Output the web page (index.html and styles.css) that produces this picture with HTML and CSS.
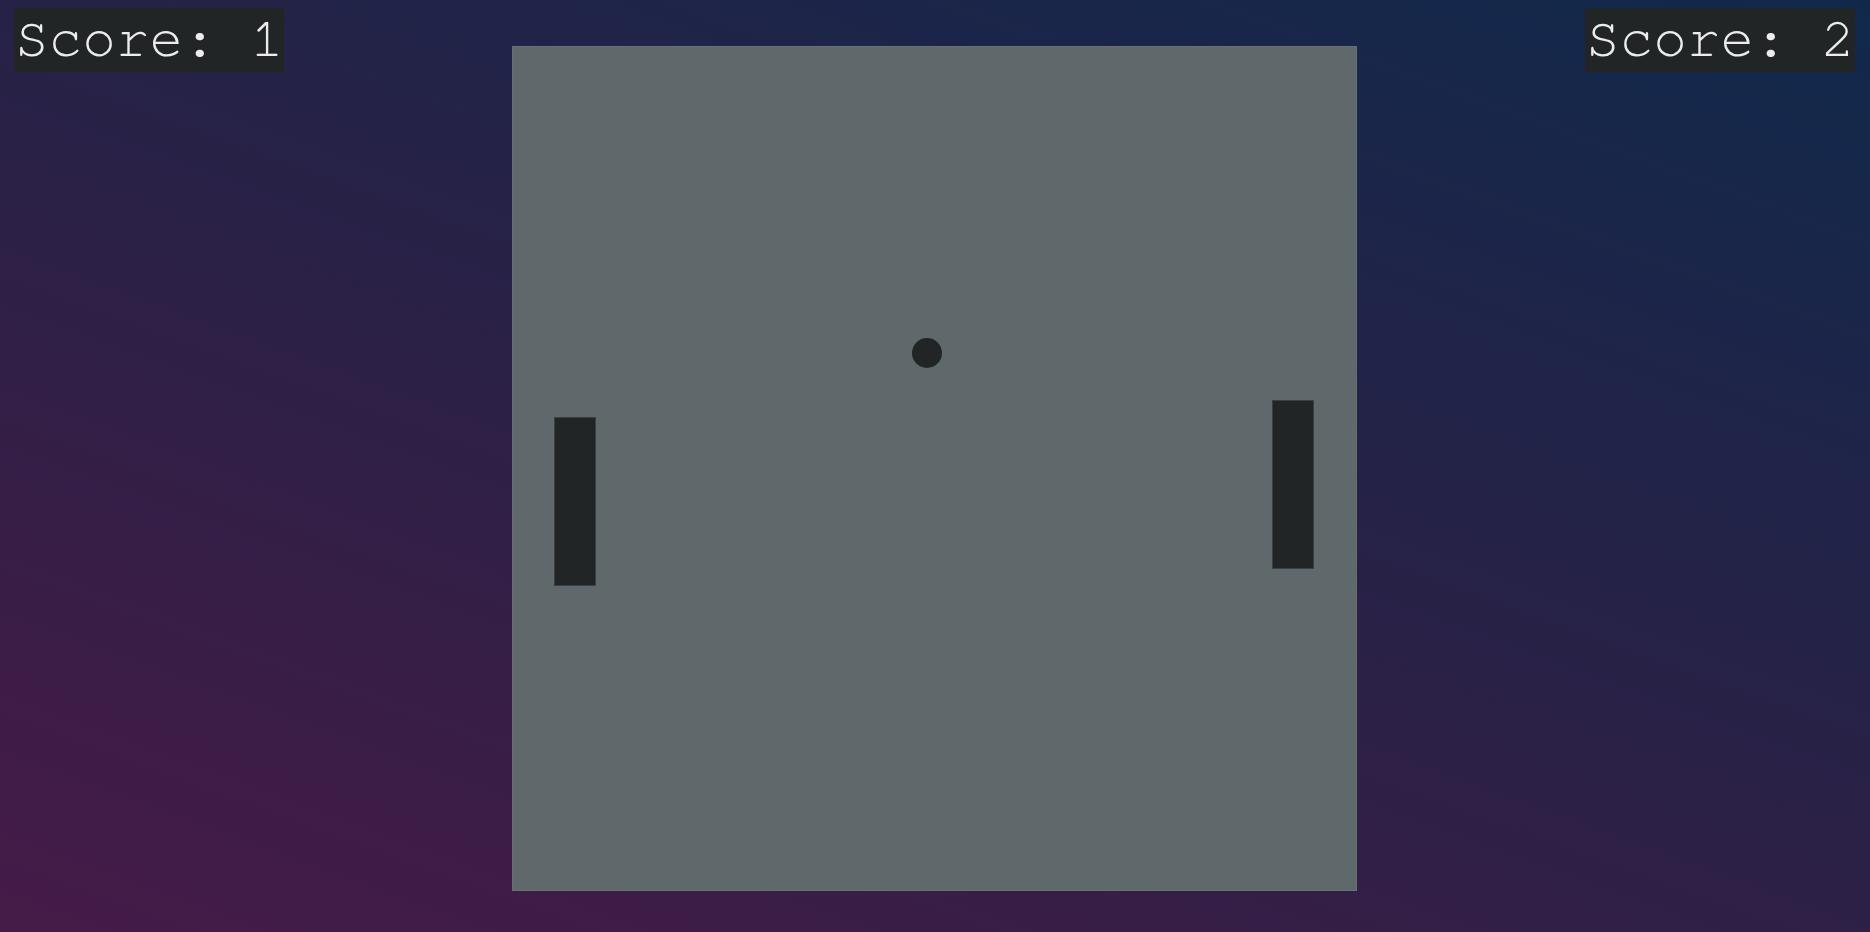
FILE: index.html
```html
<!DOCTYPE html>
<html>
<head>
<meta charset="utf-8">
<link rel="stylesheet" href="styles.css">
</head>
<body>
<div class="page">
  <div class="score score-left">Score: 1</div>
  <div class="board">
    <div class="paddle paddle-left"></div>
    <div class="ball"></div>
    <div class="paddle paddle-right"></div>
  </div>
  <div class="score score-right">Score: 2</div>
</div>
</body>
</html>
```
FILE: styles.css
```css
html, body {
  margin: 0;
  padding: 0;
  height: 100%;
}
body {
  background: linear-gradient(20deg, #461b48 0%, #2c2046 45%, #10294b 100%);
  font-family: "Nimbus Mono PS", "Nimbus Mono L", "FreeMono", "Courier 10 Pitch", "Courier", "Liberation Mono", monospace;
  overflow: hidden;
}
.page {
  height: 932px;
  display: flex;
  justify-content: space-between;
  align-items: flex-start;
  padding: 8px 15px 0 14px;
  box-sizing: border-box;
}
.score {
  background: #212526;
  color: #ececec;
  font-size: 56px;
  line-height: 62px;
  height: 64px;
  width: 270px;
  box-sizing: border-box;
  padding-left: 1px;
  white-space: nowrap;
  overflow: hidden;
}
.board {
  margin-top: 38px;
  width: 845px;
  height: 845px;
  box-sizing: border-box;
  background: #5f686b;
  border: 1px solid #687073;
  position: relative;
}
.paddle {
  position: absolute;
  width: 42px;
  height: 169px;
  background: #212526;
  border: 1px solid #3a4042;
  box-sizing: border-box;
}
.paddle-left {
  left: 41px;
  top: 370px;
}
.paddle-right {
  left: 759px;
  top: 353px;
}
.ball {
  position: absolute;
  width: 30px;
  height: 30px;
  border-radius: 50%;
  background: #212526;
  left: 399px;
  top: 291px;
}
```
